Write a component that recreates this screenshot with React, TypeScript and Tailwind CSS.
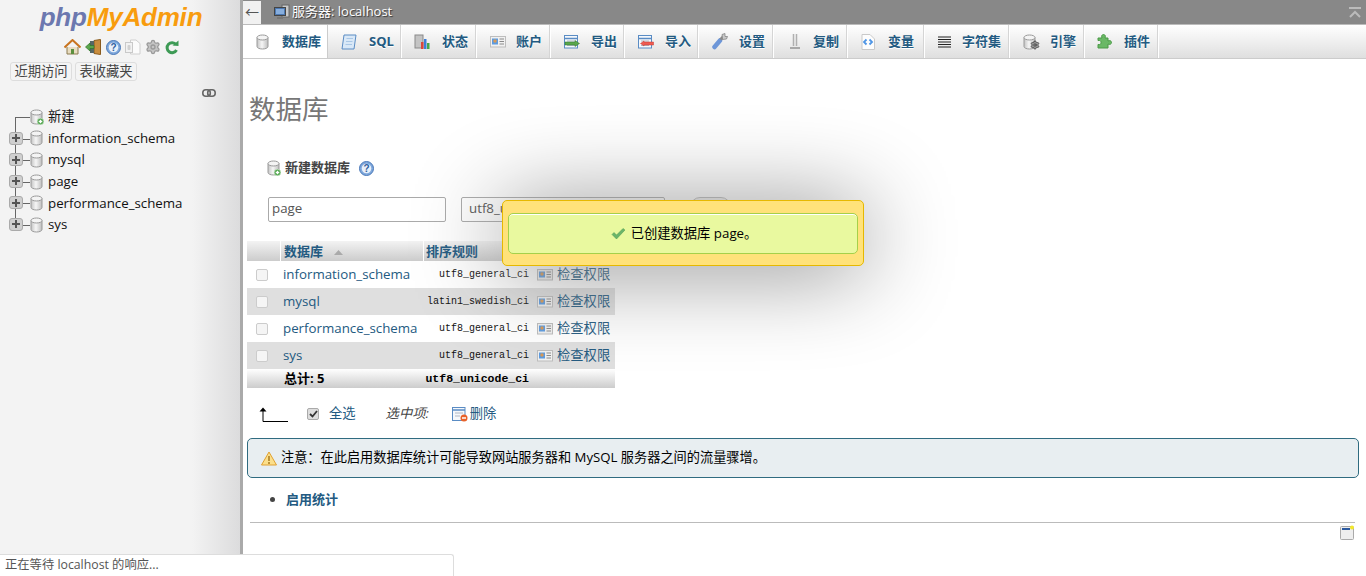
import { Settings } from 'lucide-react';

const DbIcon = ({ badge }: { badge?: boolean }) => (
  <svg width="14" height="16" viewBox="0 0 14 16" className="shrink-0">
    <defs>
      <linearGradient id="cyl" x1="0" x2="1" y1="0" y2="0">
        <stop offset="0" stopColor="#c4c4c4" />
        <stop offset="0.45" stopColor="#f6f6f6" />
        <stop offset="1" stopColor="#bdbdbd" />
      </linearGradient>
    </defs>
    <path d="M1 3.5V12.5C1 14 3.500 15 6.500 15S12 14 12 12.500V3.500Z" fill="url(#cyl)" stroke="#9a9a9a" />
    <ellipse cx="6.500" cy="3.500" rx="5.500" ry="2.500" fill="#f4f4f4" stroke="#9a9a9a" />
    {badge && (
      <>
        <circle cx="10.500" cy="12.500" r="3.300" fill="#4ea34a" stroke="#d8efd6" strokeWidth="0.6" />
        <path d="M8.700 12.500H12.300M10.500 10.700V14.300" stroke="#fff" strokeWidth="1.300" />
      </>
    )}
  </svg>
);

const HelpIcon = () => (
  <svg width="15" height="15" viewBox="0 0 15 15" className="shrink-0">
    <circle cx="7.500" cy="7.500" r="7" fill="#7fa8dc" stroke="#4a78b8" />
    <circle cx="7.500" cy="7.500" r="4.800" fill="#e8f0fa" />
    <text x="7.500" y="11" textAnchor="middle" fontSize="10" fontWeight="700" fill="#2f5f9f" fontFamily="Liberation Sans">?</text>
  </svg>
);

const HomeIcon = () => (
  <svg width="17" height="16" viewBox="0 0 17 16">
    <path d="M3 8V15H14V8" fill="#e8dcc0" stroke="#8b7a50" />
    <path d="M7 15V10H10V15" fill="#5b8f3e" />
    <path d="M0.500 8.500L8.500 1L16.500 8.500" fill="none" stroke="#c9741f" strokeWidth="2" />
  </svg>
);

const LogoutIcon = () => (
  <svg width="17" height="16" viewBox="0 0 17 16">
    <path d="M9 1.500L15.500 0.500V15.500L9 14.500Z" fill="#c98d3d" stroke="#8a5b1e" />
    <rect x="5" y="2" width="4" height="12" fill="#566" />
    <path d="M0.500 8L5 4V6.500H9V9.500H5V12Z" fill="#5aa64c" stroke="#2f7429" strokeWidth="0.7" />
  </svg>
);

const DocsIcon = () => (
  <svg width="16" height="16" viewBox="0 0 16 16">
    <path d="M5.500 1H11L15 4.500V15H5.500Z" fill="#fbfbfb" stroke="#cfcfcf" />
    <rect x="0.500" y="3.500" width="7" height="10" fill="#f2f2f2" stroke="#c9c9c9" />
    <rect x="2.500" y="6" width="3" height="5" rx="1" fill="#d0d0d0" />
  </svg>
);

const ReloadIcon = () => (
  <svg width="14" height="15" viewBox="0 0 14 15">
    <path d="M11 4.500A5 5 0 1 0 11.500 10" fill="none" stroke="#3d9a55" strokeWidth="3" />
    <path d="M7.500 5.500L13.500 6V0.500Z" fill="#3d9a55" />
  </svg>
);

const LinkIcon = () => (
  <svg width="14" height="8" viewBox="0 0 14 8">
    <rect x="0.800" y="0.800" width="7.500" height="6.400" rx="3" fill="none" stroke="#666" strokeWidth="1.600" />
    <rect x="5.700" y="0.800" width="7.500" height="6.400" rx="3" fill="none" stroke="#666" strokeWidth="1.600" />
  </svg>
);

const ServerIcon = () => (
  <svg width="16" height="16" viewBox="0 0 16 16">
    <rect x="8" y="1" width="7" height="12" fill="#c9c9c9" stroke="#666" />
    <rect x="0.500" y="3.500" width="11" height="8" fill="#4d78b0" stroke="#444" />
    <rect x="2" y="5" width="8" height="5" fill="#87aede" />
    <path d="M3 14H9" stroke="#777" strokeWidth="2" />
  </svg>
);

const SqlIcon = () => (
  <svg width="16" height="16" viewBox="0 0 16 16">
    <path d="M3 1H15L13 15H1Z" fill="#d9e8f7" stroke="#5a8cc4" />
    <path d="M5.500 4.500H12M5 7.500H11.500M4.500 10.500H11" stroke="#a9c7e6" />
  </svg>
);

const StatusIcon = () => (
  <svg width="16" height="16" viewBox="0 0 16 16">
    <rect x="1" y="1" width="8" height="13" fill="#c4c4c4" stroke="#8a8a8a" />
    <rect x="7" y="8" width="2.500" height="7" fill="#d9473c" />
    <rect x="10" y="5" width="2.500" height="10" fill="#3c7fd9" />
    <rect x="13" y="9" width="2.500" height="6" fill="#47a84a" />
  </svg>
);

const CardIcon = () => (
  <svg width="16" height="13" viewBox="0 0 16 13" className="shrink-0">
    <rect x="0.500" y="1.500" width="15" height="10.500" fill="#f1f1f1" stroke="#bdbdbd" />
    <rect x="2" y="3.500" width="6" height="6" fill="#5d9be0" />
    <circle cx="5" cy="6" r="1.700" fill="#d99a55" />
    <path d="M9.500 4H14M9.500 6.500H14M9.500 9H14" stroke="#8a8a8a" />
  </svg>
);

const ExportIcon = ({ flip }: { flip?: boolean }) => (
  <svg width="16" height="14" viewBox="0 0 16 14">
    <rect x="0.500" y="0.500" width="13" height="12.500" fill="#f5f8fc" stroke="#5a8cc4" />
    <path d="M0.500 3.500H13.500" stroke="#5a8cc4" strokeWidth="1.500" />
    <path d="M3 6H11M3 10.500H11" stroke="#b0b8c4" />
    {flip ? (
      <path d="M15.500 7H6V6L2.500 8.500L6 11V10H15.500Z" fill="#ee5b52" stroke="#c73a33" strokeWidth="0.500" />
    ) : (
      <path d="M1 7H11V5.500L15.500 8.500L11 11.500V10H1Z" fill="#5aa64c" stroke="#2f7429" strokeWidth="0.500" />
    )}
  </svg>
);

const WrenchIcon = () => (
  <svg width="16" height="17" viewBox="0 0 16 17">
    <path d="M2.500 14L8 7.500" stroke="#6d96d8" strokeWidth="4.500" strokeLinecap="round" />
    <path d="M8.500 6.500L12 3" stroke="#8a8a8a" strokeWidth="3" />
    <path d="M10 1.500L13 0.500V3.500H15.500L14.500 6L10.500 6.500Z" fill="#c9c9c9" stroke="#7a7a7a" strokeWidth="0.700" />
  </svg>
);

const ReplicationIcon = () => (
  <svg width="12" height="17" viewBox="0 0 12 17">
    <path d="M4.500 1V13M7.500 1V13" stroke="#b0b0b0" strokeWidth="1.500" />
    <path d="M1 15H11" stroke="#a8a8a8" strokeWidth="2" />
  </svg>
);

const VarsIcon = () => (
  <svg width="14" height="16" viewBox="0 0 14 16">
    <path d="M1 0.500H9L13.500 5V15.500H1Z" fill="#fdfdfd" stroke="#c9c9c9" />
    <path d="M5.500 5.500L3 8L5.500 10.500M8.500 5.500L11 8L8.500 10.500" fill="none" stroke="#4e95e5" strokeWidth="1.800" />
  </svg>
);

const CharsetIcon = () => (
  <svg width="13" height="12" viewBox="0 0 13 12">
    <path d="M0 1H13M0 3.500H13M0 6H13M0 8.500H13M0 11H13" stroke="#222" />
  </svg>
);

const EngineIcon = () => (
  <span className="relative flex h-[16px] w-[17px]">
    <DbIcon />
    <Settings size={10} className="absolute bottom-0 right-0 fill-[#999] text-[#444]" />
  </span>
);

const PuzzleIcon = () => (
  <svg width="15" height="15" viewBox="0 0 15 15">
    <path d="M1 4H5C4 2 5 0.500 6.500 0.500S9 2 8 4H11V7C13 6 14.500 7 14.500 8.500S13 11 11 10V14H1V10.500C3 11 4 10 4 8.500S3 6 1 6.500Z" fill="#6ab866" stroke="#4a9a46" />
  </svg>
);

const TreeRow = ({ label, isNew, first, last }: { label: string; isNew?: boolean; first?: boolean; last?: boolean }) => (
  <div className="relative flex h-[21.6px] items-center">
    {/* tree lines */}
    <span className={`absolute left-[15px] w-px bg-[#666] ${first ? 'top-[11px] bottom-0' : last ? 'top-0 h-[11px]' : 'top-0 bottom-0'}`} />
    <span className="absolute left-[15px] top-[11px] h-px w-[15px] bg-[#666]" />
    {!isNew && (
      <span className="absolute left-[9px] top-[4px] flex h-[13px] w-[14px] items-center justify-center rounded-[3px] border border-[#aaa] bg-[#cfcfcf] text-[#555]">
        <svg width="8" height="8" viewBox="0 0 8 8">
          <path d="M4 0V8M0 4H8" stroke="#555" strokeWidth="2" />
        </svg>
      </span>
    )}
    <span className="relative ml-[30px] flex w-[18px]">
      <DbIcon badge={isNew} />
    </span>
    <span className="text-[13.3px] leading-none text-[#111]">{label}</span>
  </div>
);

const tabs = [
  { label: '数据库', icon: <DbIcon />, cls: 'w-[85px] pl-[13px] gap-[12px]', active: true },
  { label: 'SQL', icon: <SqlIcon />, cls: 'w-[74px] pl-[13px] gap-[12px]' },
  { label: '状态', icon: <StatusIcon />, cls: 'w-[75px] pl-[12px] gap-[12px]' },
  { label: '账户', icon: <CardIcon />, cls: 'w-[74px] pl-[13px] gap-[10px]' },
  { label: '导出', icon: <ExportIcon />, cls: 'w-[74px] pl-[13px] gap-[11px]' },
  { label: '导入', icon: <ExportIcon flip />, cls: 'w-[74px] pl-[13px] gap-[11px]' },
  { label: '设置', icon: <WrenchIcon />, cls: 'w-[75px] pl-[13px] gap-[11px]' },
  { label: '复制', icon: <ReplicationIcon />, cls: 'w-[74px] pl-[15px] gap-[12px]' },
  { label: '变量', icon: <VarsIcon />, cls: 'w-[77px] pl-[13px] gap-[13px]' },
  { label: '字符集', icon: <CharsetIcon />, cls: 'w-[85px] pl-[13px] gap-[11px]' },
  { label: '引擎', icon: <EngineIcon />, cls: 'w-[75px] pl-[13px] gap-[10px]' },
  { label: '插件', icon: <PuzzleIcon />, cls: 'w-[74px] pl-[12px] gap-[12px]' },
];

const dbRows = [
  { name: 'information_schema', coll: 'utf8_general_ci' },
  { name: 'mysql', coll: 'latin1_swedish_ci', odd: true },
  { name: 'performance_schema', coll: 'utf8_general_ci' },
  { name: 'sys', coll: 'utf8_general_ci', odd: true },
];

export default function App() {
  return (
    <div className="relative flex h-[576px] w-[1366px] overflow-hidden bg-white font-['Open_Sans','Noto_Sans_CJK_SC',sans-serif] text-[13.3px] text-[#444]">
      {/* Navigation panel */}
      <aside className="w-[240px] shrink-0 bg-[linear-gradient(to_right,#f3f3f3_0%,#f3f3f3_80%,#dcdcdd_100%)]">
        <div className="flex h-[37px] items-start justify-center pl-[2px]">
          <span className="font-['Liberation_Sans',sans-serif] text-[26px] font-bold italic leading-[34px] tracking-[-0.2px]">
            <span className="text-[#6c78af]">php</span>
            <span className="text-[#f89c0e]">MyAdmin</span>
          </span>
        </div>
        <div className="flex h-[20px] items-center gap-[4px] pl-[64px]">
          <HomeIcon />
          <LogoutIcon />
          <HelpIcon />
          <DocsIcon />
          <Settings size={16} className="fill-[#c4c4c4] text-[#9a9a9a]" />
          <ReloadIcon />
        </div>
        <div className="mt-[5px] flex gap-[3px] pl-[10px]">
          <button className="h-[19px] w-[62px] rounded-[3px] border border-[#ddd] bg-[#f4f4f4] text-[13.3px] leading-none text-[#444]">近期访问</button>
          <button className="h-[19px] w-[62px] rounded-[3px] border border-[#ddd] bg-[#f4f4f4] text-[13.3px] leading-none text-[#444]">表收藏夹</button>
        </div>
        <div className="flex h-[24px] items-center justify-end pr-[24px]">
          <LinkIcon />
        </div>
        <div className="pt-[1px]">
          <TreeRow label="新建" isNew first />
          <TreeRow label="information_schema" />
          <TreeRow label="mysql" />
          <TreeRow label="page" />
          <TreeRow label="performance_schema" />
          <TreeRow label="sys" last />
        </div>
      </aside>
      <div className="w-[3px] shrink-0 bg-[#aaa]" />

      {/* Main panel */}
      <main className="min-w-0 flex-1">
        <div className="flex h-[25px] items-center border-b border-[#bbb] bg-[#888]">
          <span className="flex h-[23px] w-[18px] items-center justify-center bg-[#f1f1f1] text-[14px] leading-none text-[#555]">←</span>
          <span className="ml-[13px] mr-[2px] flex"><ServerIcon /></span>
          <span className="text-[13px] text-white [text-shadow:1px_1px_1px_#333]">服务器: localhost</span>
          <svg width="14" height="11" viewBox="0 0 14 11" className="ml-auto mr-[4px]">
            <path d="M1 1H13M2 10L7 5L12 10" fill="none" stroke="#bbb" strokeWidth="2" />
          </svg>
        </div>
        <nav className="flex h-[34px] border-b border-[#ccc] bg-[linear-gradient(#ffffff,#dfdfdf)]">
          {tabs.map((t) => (
            <div
              key={t.label}
              className={`flex h-full shrink-0 items-center border-r border-white text-[13px] font-bold text-[#235a81] [text-shadow:0_1px_0_#fff] ${t.cls} ${
                t.active ? 'relative h-[34px] bg-white border-r-[#ccc]' : 'border-r-[#fff] shadow-[inset_-1px_0_0_#d5d5d5]'
              }`}
            >
              {t.icon}
              <span>{t.label}</span>
            </div>
          ))}
        </nav>

        <div className="pl-[4px]">
          <h2 className="ml-[2px] mt-[32px] text-[26.5px] font-normal leading-[36px] text-[#777]">数据库</h2>

          <div className="ml-[20px] mt-[31px] flex h-[20px] items-center">
            <DbIcon badge />
            <span className="ml-[4px] text-[13px] font-bold text-[#444]">新建数据库</span>
            <span className="ml-[9px] flex"><HelpIcon /></span>
          </div>

          <div className="mt-[18px] flex h-[26px] items-center pl-[21px]">
            <div className="flex h-[25px] w-[178px] items-center rounded-[2px] border border-[#aaa] bg-white pl-[3px] text-[#555]">page</div>
            <div className="ml-[15px] flex h-[25px] w-[204px] items-center rounded-[2px] border border-[#aaa] bg-white pl-[7px] text-[#555]">utf8_unicode_ci</div>
            <div className="ml-[25px] h-[25px] w-[41px] rounded-[10px] border border-[#bbb] bg-[#f1f1f1]" />
          </div>

          {/* Database list */}
          <div className="mt-[19px] w-[368px]">
            <div className="flex h-[20px] gap-px text-[13px] font-bold leading-[20px] text-[#235a81] [&>div]:bg-[linear-gradient(#f3f3f3,#cccccc)]">
              <div className="w-[33px]" />
              <div className="flex w-[142px] items-center pl-[3px]">
                数据库
                <svg width="9" height="5" viewBox="0 0 9 5" className="ml-[11px] mt-[2px]"><path d="M0 5L4.500 0L9 5Z" fill="#aaa" /></svg>
              </div>
              <div className="w-[108px] pl-[2px]">排序规则</div>
              <div className="flex-1" />
            </div>
            {dbRows.map((r) => (
              <div key={r.name} className={`flex h-[27px] items-center ${r.odd ? 'bg-[#dfdfdf]' : 'bg-white'}`}>
                <div className="flex w-[34px] justify-center pr-[4px]">
                  <span className="h-[12px] w-[12px] rounded-[2px] border border-[#ccc] bg-[#f5f5f5]" />
                </div>
                <div className="w-[107px] whitespace-nowrap pl-[2px] text-[#235a81]">{r.name}</div>
                <div className="w-[141px] text-right font-['Liberation_Mono',monospace] text-[10px] text-[#111]">{r.coll}</div>
                <div className="ml-[8px] flex items-center gap-[4px] whitespace-nowrap text-[#235a81]">
                  <CardIcon />
                  检查权限
                </div>
              </div>
            ))}
            <div className="flex h-[19px] items-center bg-[linear-gradient(#ffffff,#cccccc)] font-bold text-[#000]">
              <div className="w-[37px]" />
              <div className="w-[104px] text-[13px]">总计: 5</div>
              <div className="w-[141px] text-right font-['Liberation_Mono',monospace] text-[11.5px]">utf8_unicode_ci</div>
            </div>
          </div>

          {/* With selected */}
          <div className="mt-[15px] flex h-[22px] items-center">
            <svg width="29" height="15" viewBox="0 0 29 15" className="ml-[12px]">
              <path d="M4 3V14.500H29" fill="none" stroke="#000" />
              <path d="M0.500 4.500L4 0.500L7.500 4.500Z" fill="#000" />
            </svg>
            <span className="ml-[19px] flex h-[12px] w-[12px] items-center justify-center rounded-[2px] border border-[#aaa] bg-[#ddd]">
              <svg width="9" height="8" viewBox="0 0 9 8"><path d="M1 4L3.500 6.500L8 1" fill="none" stroke="#333" strokeWidth="1.800" /></svg>
            </span>
            <span className="ml-[10px] text-[#235a81]">全选</span>
            <span className="ml-[30px] italic text-[#444]">选中项:</span>
            <span className="ml-[23px] flex">
              <svg width="16" height="16" viewBox="0 0 16 16">
                <rect x="0.500" y="1.500" width="12.500" height="13" fill="#f5f8fc" stroke="#5a8cc4" />
                <path d="M0.500 4H13" stroke="#5a8cc4" strokeWidth="1.500" />
                <path d="M3 7H11M3 10H8" stroke="#b0b8c4" />
                <circle cx="12" cy="12" r="3.500" fill="#e8622a" />
                <path d="M10 12H14" stroke="#fff" strokeWidth="1.500" />
              </svg>
            </span>
            <span className="ml-[2px] text-[#235a81]">删除</span>
          </div>

          <div className="mt-[13px] flex h-[40px] w-[1112px] items-center rounded-[5px] border border-[#2f6b80] bg-[#e8eef1] pl-[13px] text-[13.2px] text-[#000]">
            <svg width="16" height="15" viewBox="0 0 16 15" className="mr-[4px]">
              <path d="M8 1L15.500 14H0.500Z" fill="#fbdf8b" stroke="#e0a030" />
              <path d="M8 5V10M8 11V13" stroke="#9a6a10" strokeWidth="1.300" />
            </svg>
            注意：在此启用数据库统计可能导致网站服务器和 MySQL 服务器之间的流量骤增。
          </div>

          <ul className="mt-[11px] list-disc pl-[39px] text-[#444] marker:text-[#444]">
            <li className="text-[13px] font-bold leading-[20px] text-[#235a81]">启用统计</li>
          </ul>

          <div className="ml-[3px] mt-[13px] h-px w-[1105px] bg-[#bbb]" />
          <div className="mr-[12px] mt-[2px] flex justify-end">
            <svg width="14" height="15" viewBox="0 0 14 15">
              <rect x="0.500" y="1.500" width="13" height="13" rx="1" fill="#eee" stroke="#aaa" />
              <rect x="2" y="3" width="8" height="2" fill="#2c5aa0" />
              <circle cx="12" cy="2.500" r="2" fill="#f3e82a" />
            </svg>
          </div>
        </div>
      </main>

      {/* Ajax notification */}
      <div className="absolute left-[502px] top-[200px] h-[66px] w-[362px] rounded-[5px] border border-[#e6b800] bg-[#ffe27a] px-[5px] pt-[12px] shadow-[0_5px_90px_#888]">
        <div className="flex h-[41px] items-center justify-center rounded-[5px] border border-[#a5d04a] bg-[#e9f99f] pl-[2px] text-[#000] shadow-[inset_0_1px_0_#fff]">
          <svg width="15" height="12" viewBox="0 0 15 12" className="mr-[5px]">
            <path d="M1 6.500L5.500 11L14 2L12 0.500L5.500 7L3 4.500Z" fill="#6ab56a" stroke="#4d9a4d" strokeWidth="0.500" />
          </svg>
          已创建数据库 page。
        </div>
      </div>

      {/* Browser status bubble */}
      <div className="absolute bottom-0 left-0 flex h-[22px] w-[454px] items-center rounded-tr-[3px] border-r border-t border-[#ddd] bg-white pl-[5px] text-[12.3px] text-[#555]">
        正在等待 localhost 的响应...
      </div>
    </div>
  );
}
